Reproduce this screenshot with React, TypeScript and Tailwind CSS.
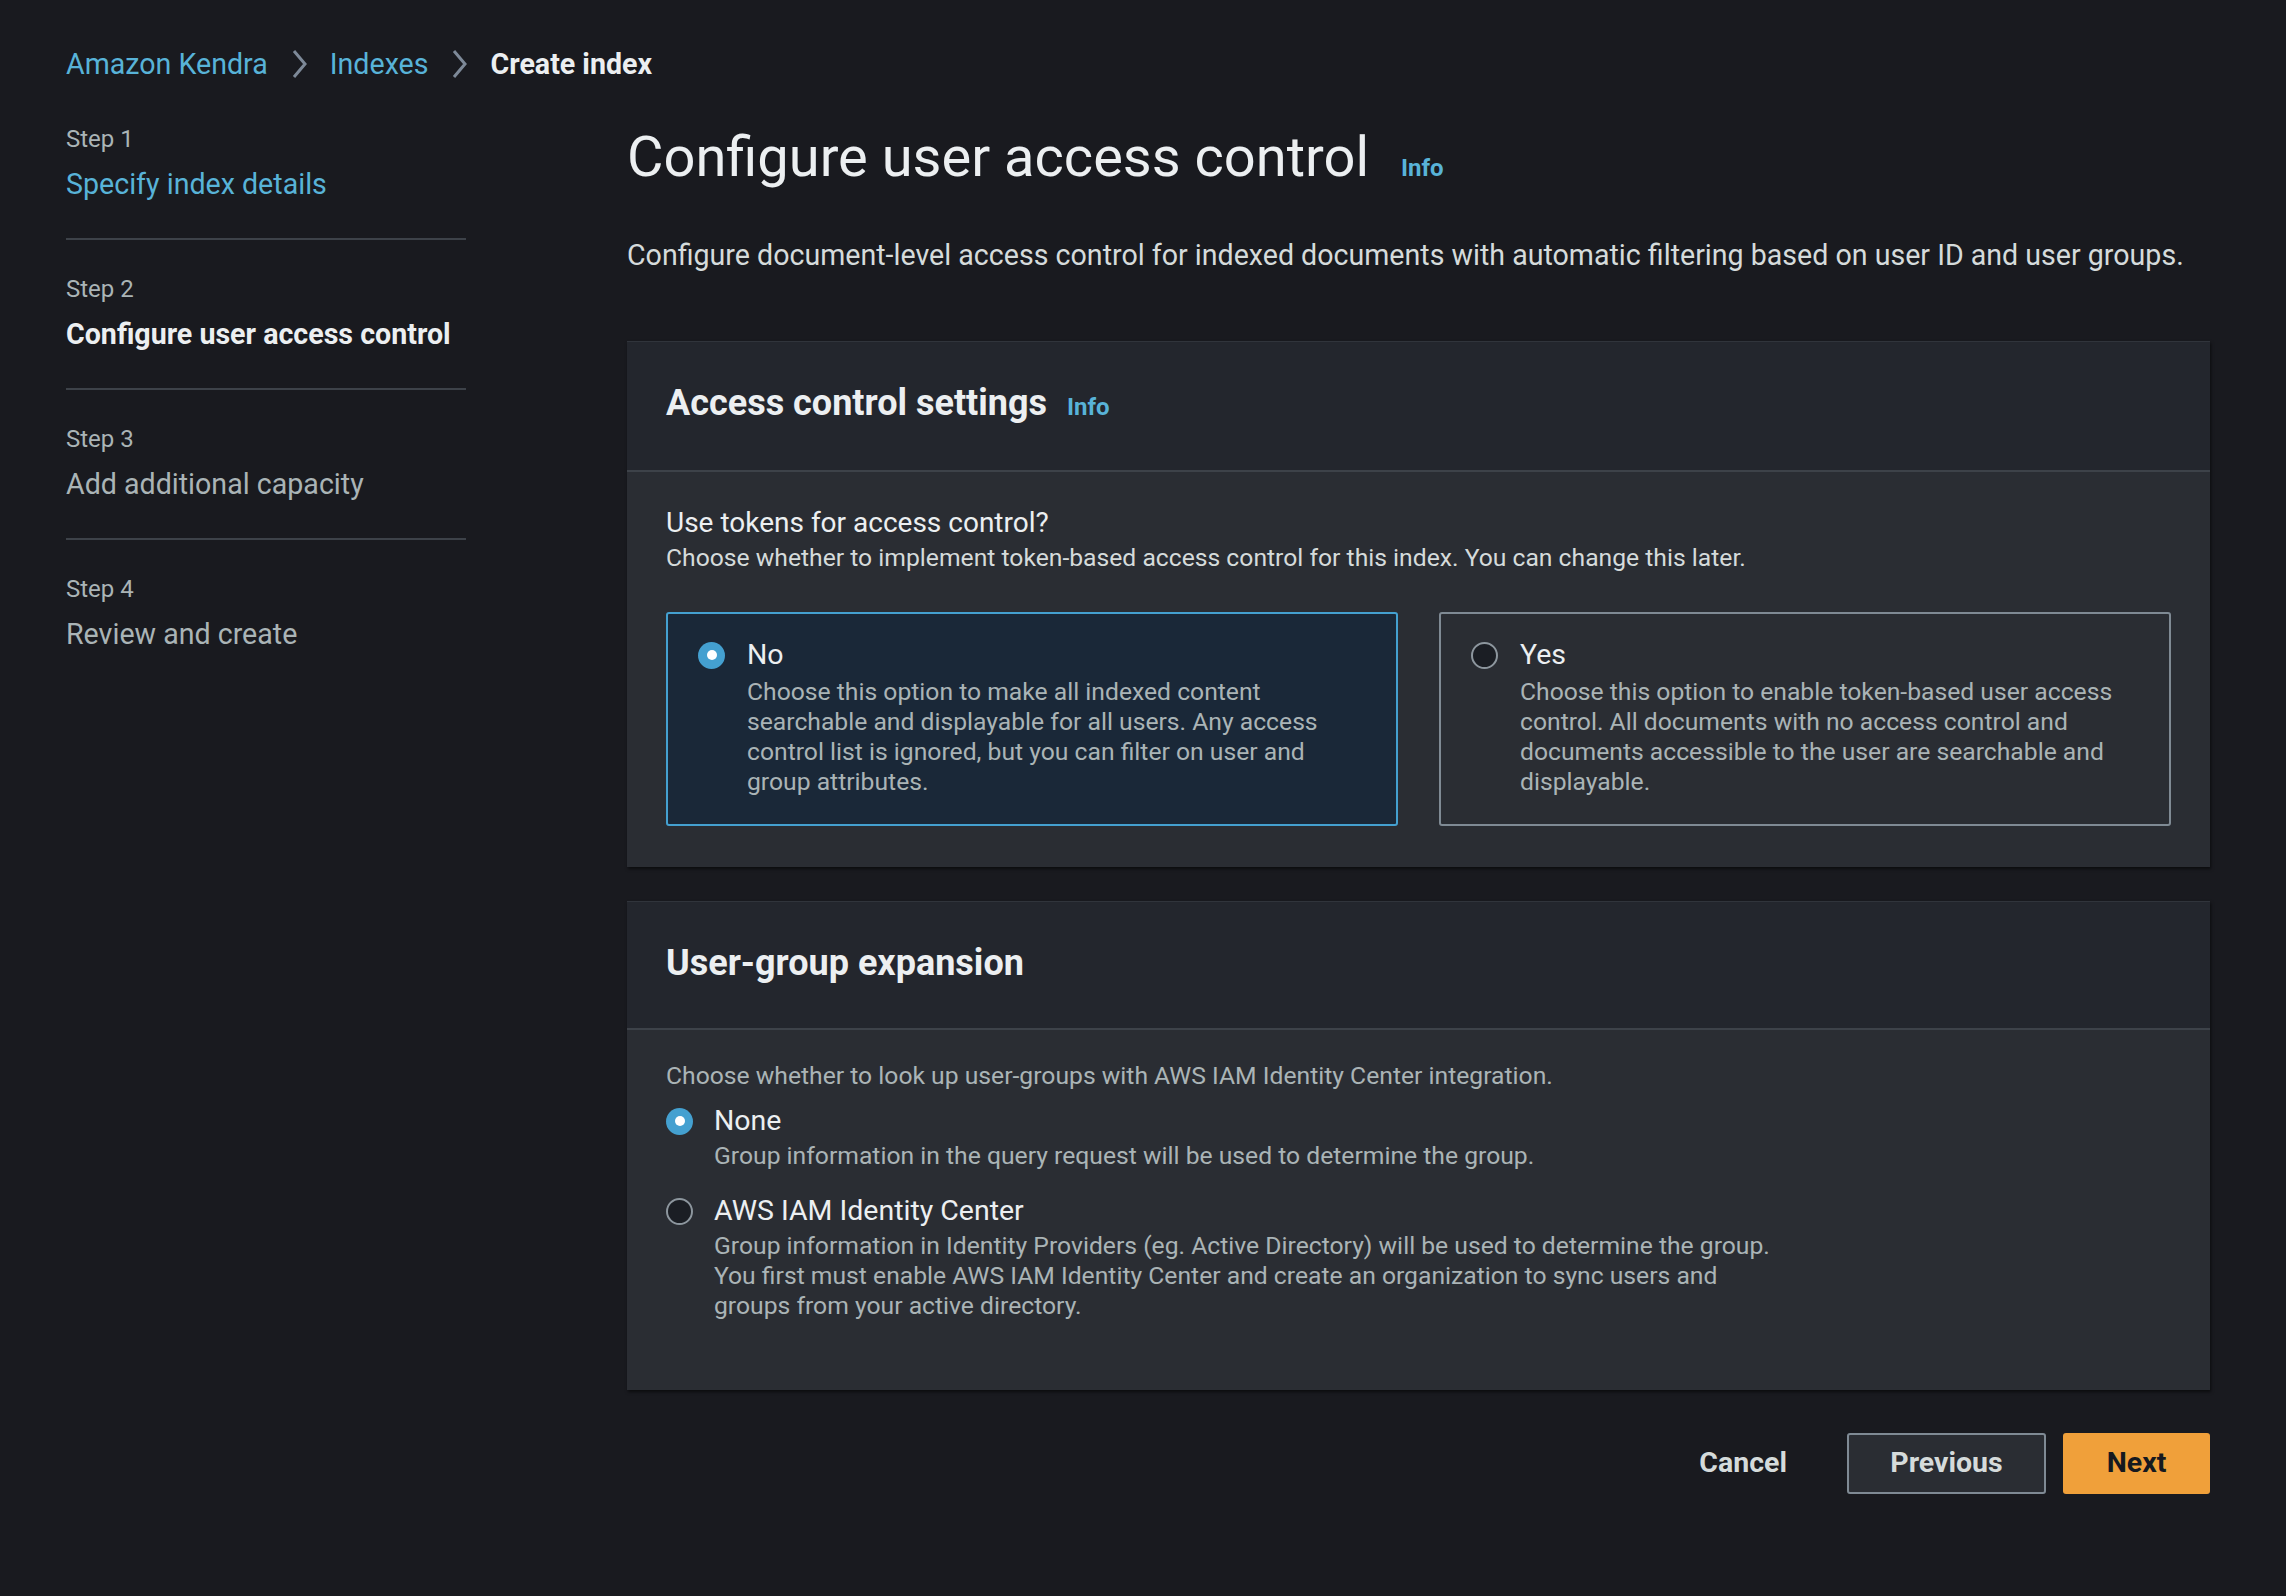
import React from "react";

const steps = [
  { n: "Step 1", label: "Specify index details", state: "link" },
  { n: "Step 2", label: "Configure user access control", state: "active" },
  { n: "Step 3", label: "Add additional capacity", state: "idle" },
  { n: "Step 4", label: "Review and create", state: "idle" },
];

function Chevron() {
  return (
    <svg width="20" height="34" viewBox="0 0 20 34" className="mx-[21px]">
      <polyline points="5,4 16,17 5,30" fill="none" stroke="#7d8998" strokeWidth="3" />
    </svg>
  );
}

function Radio({ on }: { on: boolean }) {
  return on ? (
    <span className="flex h-[27px] w-[27px] shrink-0 items-center justify-center rounded-full bg-[#44a0d0]">
      <span className="h-[10px] w-[10px] rounded-full bg-white" />
    </span>
  ) : (
    <span className="h-[27px] w-[27px] shrink-0 rounded-full border-2 border-[#8d969e] bg-[#1b1e24]" />
  );
}

function Info() {
  return <span className="text-[24px] font-bold text-[#58b3d8]">Info</span>;
}

function Panel({ title, info, children, bodyClass }: any) {
  return (
    <div className="border-t border-[#30343b] shadow-[1px_2px_3px_rgba(0,0,0,0.55)]">
      <div className="flex items-baseline gap-[20px] border-b-2 border-[#3d4249] bg-[#23262d] px-[39px] pt-[41px] pb-[45px]">
        <h2 className="text-[36px] font-bold leading-[40px] text-[#eceff1]">{title}</h2>
        {info && <Info />}
      </div>
      <div className={"bg-[#2a2d33] px-[39px] " + bodyClass}>{children}</div>
    </div>
  );
}

function Card({ on, label, desc }: any) {
  return (
    <div
      className={
        "flex-1 rounded-[3px] border-2 pt-[25px] pb-[27px] pl-[30px] pr-[40px] " +
        (on ? "border-[#44a0d0] bg-[#1a2838]" : "border-[#7f8a94]")
      }
    >
      <div className="flex items-center gap-[22px]">
        <Radio on={on} />
        <span className="text-[28.5px] leading-[32px] text-[#eceff1]">{label}</span>
      </div>
      <p className="mt-[6px] pl-[49px] text-[24.7px] leading-[30px] text-[#aab4b6]">{desc}</p>
    </div>
  );
}

export default function App() {
  return (
    <div className="min-h-screen bg-[#191a1f] pl-[66px] pr-[76px] pt-[44px] pb-[100px] font-['Roboto','Liberation_Sans',sans-serif]">
      {/* breadcrumb */}
      <nav className="flex h-[40px] items-center text-[28.6px]">
        <span className="text-[#58b3d8]">Amazon Kendra</span>
        <Chevron />
        <span className="text-[#58b3d8]">Indexes</span>
        <Chevron />
        <span className="font-bold text-[#eceff1]">Create index</span>
      </nav>

      <div className="mt-[40px] flex gap-[161px]">
        {/* steps */}
        <aside className="w-[400px] shrink-0">
          {steps.map((s, i) => (
            <div key={s.n} className={i > 0 ? "pt-[34px]" : ""}>
              <div className="text-[24px] leading-[30px] text-[#aab4b6]">{s.n}</div>
              <div
                className={
                  "mt-[12px] text-[28.6px] leading-[36px] " +
                  (s.state === "link"
                    ? "text-[#58b3d8]"
                    : s.state === "active"
                    ? "font-bold text-[#eceff1]"
                    : "text-[#aab4b6]")
                }
              >
                {s.label}
              </div>
              {i < steps.length - 1 && <div className="mt-[36px] h-[2px] bg-[#3d4249]" />}
            </div>
          ))}
        </aside>

        {/* main */}
        <main className="flex-1">
          <div className="mt-[3px] flex items-baseline gap-[32px]">
            <h1 className="text-[56px] leading-[60px] text-[#eceff1]">Configure user access control</h1>
            <Info />
          </div>
          <p className="mt-[51px] text-[28.6px] leading-[34px] text-[#d5dbdb]">
            Configure document-level access control for indexed documents with automatic filtering based on user ID and
            user groups.
          </p>

          <div className="mt-[69px]">
            <Panel title="Access control settings" info bodyClass="pt-[34px] pb-[41px]">
              <div className="text-[28px] leading-[34px] text-[#eceff1]">Use tokens for access control?</div>
              <div className="mt-[3px] text-[24.7px] leading-[30px] text-[#d5dbdb]">
                Choose whether to implement token-based access control for this index. You can change this later.
              </div>
              <div className="mt-[39px] flex gap-[41px]">
                <Card
                  on
                  label="No"
                  desc="Choose this option to make all indexed content searchable and displayable for all users. Any access control list is ignored, but you can filter on user and group attributes."
                />
                <Card
                  label="Yes"
                  desc="Choose this option to enable token-based user access control. All documents with no access control and documents accessible to the user are searchable and displayable."
                />
              </div>
            </Panel>
          </div>

          <div className="mt-[34px]">
            <Panel title="User-group expansion" bodyClass="pt-[31px] pb-[69px]">
              <div className="text-[24.7px] leading-[30px] text-[#aab4b6]">
                Choose whether to look up user-groups with AWS IAM Identity Center integration.
              </div>
              <div className="mt-[14px] flex items-center gap-[21px]">
                <Radio on />
                <span className="text-[28.5px] leading-[32px] text-[#eceff1]">None</span>
              </div>
              <p className="mt-[4px] pl-[48px] text-[24.7px] leading-[30px] text-[#aab4b6]">
                Group information in the query request will be used to determine the group.
              </p>
              <div className="mt-[24px] flex items-center gap-[21px]">
                <Radio on={false} />
                <span className="text-[28.5px] leading-[32px] text-[#eceff1]">AWS IAM Identity Center</span>
              </div>
              <p className="mt-[4px] max-w-[1120px] pl-[48px] text-[24.7px] leading-[30px] text-[#aab4b6]">
                Group information in Identity Providers (eg. Active Directory) will be used to determine the group.
                <br />
                You first must enable AWS IAM Identity Center and create an organization to sync users and groups from
                your active directory.
              </p>
            </Panel>
          </div>

          <div className="mt-[43px] flex items-center justify-end">
            <button className="px-[20px] text-[28.5px] font-bold text-[#d5dbdb]">Cancel</button>
            <button className="ml-[40px] h-[61px] w-[199px] rounded-[3px] border-2 border-[#7f8a94] bg-[#2a2d33] text-[28.5px] font-bold text-[#d5dbdb]">
              Previous
            </button>
            <button className="ml-[17px] h-[61px] w-[147px] rounded-[3px] bg-[#f0a03a] text-[28.5px] font-bold text-[#16191f]">
              Next
            </button>
          </div>
        </main>
      </div>
    </div>
  );
}
